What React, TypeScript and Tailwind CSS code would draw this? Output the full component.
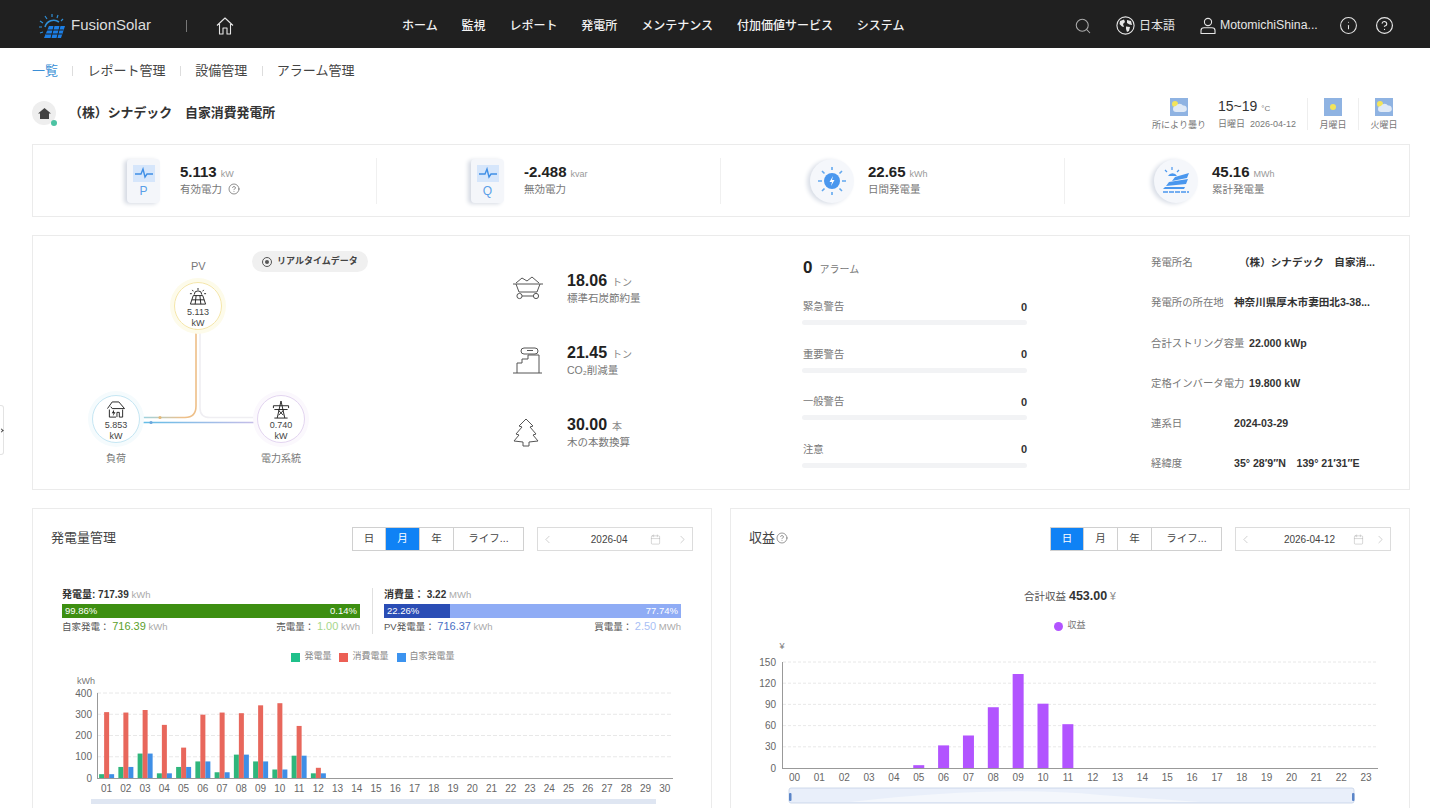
import { ChevronLeft, ChevronRight, Calendar, CircleHelp, Info, Search } from "lucide-react";

const FONT = "font-['Liberation_Sans','Noto_Sans_CJK_JP',sans-serif]";

const NAV = ["ホーム", "監視", "レポート", "発電所", "メンテナンス", "付加価値サービス", "システム"];

const ALARMS = ["緊急警告", "重要警告", "一般警告", "注意"];

const INFO = [
    { label: "発電所名", value: "（株）シナデック　自家消...", w: "w-[88px]" },
    { label: "発電所の所在地", value: "神奈川県厚木市妻田北3-38...", w: "w-[83px]" },
    { label: "合計ストリング容量", value: "22.000 kWp", w: "w-[98px]" },
    { label: "定格インバータ電力", value: "19.800 kW", w: "w-[98px]" },
    { label: "連系日", value: "2024-03-29", w: "w-[83px]" },
    { label: "経緯度", value: "35° 28′9″N　139° 21′31″E", w: "w-[83px]" },
];

const GEN = [18, 52, 115, 22, 52, 78, 27, 110, 78, 40, 105, 22];
const USE = [310, 308, 320, 250, 143, 298, 308, 305, 342, 352, 245, 48];
const REVENUE: Record<number, number> = { 5: 4, 6: 32, 7: 46, 8: 86, 9: 133, 10: 91, 11: 62 };

function Logo() {
    return (
        <svg width="28" height="26" viewBox="0 0 28 26" fill="none">
            <path d="M10 13 L26 13 L22 25 L5 25 Z" fill="#1c7fe6" />
            <path d="M8 17 L24.5 17 M7 21 L23 21 M15 13 L12 25 M21 13 L18 25" stroke="#1f1f1f" strokeWidth="1" />
            <path d="M6 14 A9 9 0 0 1 20 9" stroke="#2f8fd8" strokeWidth="1.6" />
            <path d="M13 1 V4 M6 3 L8 6 M19 2 L18 5 M1 8 L4 10 M0 14 H3 M1 20 L4 19 M24 6 L22 8" stroke="#2f8fd8" strokeWidth="1.2" />
        </svg>
    );
}

function HomeOutline() {
    return (
        <svg width="18" height="18" viewBox="0 0 18 18" fill="none" stroke="#e5e5e5" strokeWidth="1.1">
            <path d="M1 8.5 L9 1 L17 8.5 M3.5 7 V17 H7 V11 H11 V17 H14.5 V7" strokeLinejoin="round" />
        </svg>
    );
}

function GlobeIcon() {
    return (
        <svg width="19" height="19" viewBox="0 0 19 19" className="ml-[24px]">
            <circle cx="9.5" cy="9.5" r="8.6" fill="none" stroke="#e5e5e5" strokeWidth="1.1" />
            <path d="M4 5 L8 3.5 L9 6 L7 8 L8 11 L6 10.5 L3.5 8 Z M11 4 L15 5 L16 9 L13.5 8.5 L11 7 Z M10 10.5 L14 11 L13 15 L11 16 L10 13 Z" fill="#e5e5e5" />
        </svg>
    );
}

function UserIcon() {
    return (
        <svg width="16" height="18" viewBox="0 0 16 18" fill="none" stroke="#e5e5e5" strokeWidth="1.1" className="ml-[25px]">
            <circle cx="8" cy="5" r="3.6" />
            <path d="M1 16.5 V13.5 Q1 10.8 4 10.8 H12 Q15 10.8 15 13.5 V16.5 Z" strokeLinejoin="round" />
        </svg>
    );
}

function WeatherIcon({ cloud = true }: { cloud?: boolean }) {
    return (
        <svg width="18" height="18" viewBox="0 0 18 18" className="shrink-0">
            <rect width="18" height="18" fill="#8fb3e2" />
            {cloud ? (
                <>
                    <circle cx="5" cy="6" r="3" fill="#f3e45a" />
                    <path d="M6 14 a3 3 0 0 1 0-6 a4 4 0 0 1 7-0.5 a3.2 3.2 0 0 1 1 6.5 Z" fill="#dfe9f6" />
                </>
            ) : (
                <circle cx="9" cy="9" r="3" fill="#f3e45a" />
            )}
        </svg>
    );
}

function MeterIcon({ letter }: { letter: string }) {
    return (
        <div className="w-[33px] h-[44px] rounded-[4px] bg-[#f4f6fa] shadow-[-3px_1px_4px_#d5dae3] flex flex-col items-center pt-[6px]">
            <svg width="22" height="17" viewBox="0 0 22 17">
                <rect width="22" height="17" fill="#d6e6fb" />
                <path d="M2 9 H8 L10 4 L12 12 L14 9 H20" fill="none" stroke="#3f8fe6" strokeWidth="1.4" />
            </svg>
            <span className="text-[12px] leading-[18px] text-[#5a9fe8]">{letter}</span>
        </div>
    );
}

function SunIcon() {
    return (
        <div className="w-[44px] h-[44px] rounded-full bg-[#f5f7fb] shadow-[-3px_1px_4px_#d9dee7] flex items-center justify-center">
            <svg width="32" height="32" viewBox="0 0 32 32">
                <circle cx="16" cy="16" r="8" fill="#4a97ee" />
                <path d="M17 11 L13.5 17 H16 L15 21 L18.5 15 H16 Z" fill="#fff" />
                <path d="M16 2 V5 M16 27 V30 M2 16 H6 M26 16 H30 M6 6 L8.5 8.5 M26 6 L23.5 8.5 M6 26 L8.5 23.5 M26 26 L23.5 23.5" stroke="#62a8ef" strokeWidth="1.6" />
            </svg>
        </div>
    );
}

function FieldIcon() {
    return (
        <div className="w-[44px] h-[44px] rounded-full bg-[#f5f7fb] shadow-[-3px_1px_4px_#d9dee7] flex items-center justify-center">
            <svg width="32" height="32" viewBox="0 0 32 32">
                <path d="M8 11 a5 5 0 0 1 9 0 Z" fill="#4a97ee" />
                <path d="M12 2 V5 M5 5 L7 7 M19 5 L17 7" stroke="#4a97ee" strokeWidth="1.2" />
                <path d="M15 12 L29 8 L27 13 L12 16 Z M9 17 L28 14 L26 19 L6 21 Z M5 22 H25 L24 24 H3 Z" fill="#4a97ee" />
                <path d="M3 27 H29" stroke="#4a97ee" strokeWidth="1.6" strokeDasharray="5 1" />
            </svg>
        </div>
    );
}

function Kpi({ icon, value, unit, label, help }: { icon: React.ReactNode; value: string; unit: string; label: string; help?: boolean }) {
    return (
        <div className="flex items-center w-[344px] h-[46px] border-r border-[#f0f0f0] last:border-r-0">
            <div className="w-[47px] flex justify-center ml-[87px] mr-[1px]">{icon}</div>
            <div className="ml-[12px] mb-[3px]">
                <div className="flex items-baseline gap-[4px] leading-[20px]">
                    <span className="text-[15px] font-bold text-[#222]">{value}</span>
                    <span className="text-[9px] text-[#999]">{unit}</span>
                </div>
                <div className="flex items-center gap-[6px] text-[10.5px] leading-[14px] text-[#777] mt-[-2px]">
                    {label}
                    {help && <CircleHelp size={12} strokeWidth={1.2} className="text-[#444]" />}
                </div>
            </div>
        </div>
    );
}

function FlowNode({ pos, ring, value, label, children }: { pos: string; ring: string; value: string; label: string; children: React.ReactNode }) {
    return (
        <div className={`absolute w-[48px] ${pos}`}>
            <div className={`w-[48px] h-[48px] rounded-full border-[1.5px] bg-white flex flex-col items-center pt-[5px] ${ring}`}>
                {children}
                <span className="text-[9px] leading-[11px] text-[#444] mt-[1px]">{value}</span>
                <span className="text-[9px] leading-[11px] text-[#444]">kW</span>
            </div>
            {label && <div className="text-center text-[10px] whitespace-nowrap text-[#777] mt-[8px] flex justify-center">{label}</div>}
        </div>
    );
}

function FlowDiagram() {
    return (
        <div className="relative w-[480px] h-[253px] shrink-0">
            <svg className="absolute left-0 top-0" width="480" height="253" fill="none">
                <defs>
                    <linearGradient id="loadFlow" x1="85" x2="150" y1="0" y2="0" gradientUnits="userSpaceOnUse">
                        <stop offset="0.3" stopColor="#8fd5ee" />
                        <stop offset="1" stopColor="#eec08a" />
                    </linearGradient>
                    <linearGradient id="gridFlow" x1="110" x2="225" y1="0" y2="0" gradientUnits="userSpaceOnUse">
                        <stop offset="0" stopColor="#62bde6" />
                        <stop offset="1" stopColor="#c9bde8" />
                    </linearGradient>
                </defs>
                <path d="M167 80 V172 Q167 181.5 177 181.5 H250" stroke="#efeef2" strokeWidth="1.6" />
                <path d="M163 80 V170 Q163 181.5 152 181.5" stroke="#eebf88" strokeWidth="1.6" />
                <path d="M152 181.5 H85" stroke="url(#loadFlow)" strokeWidth="1.6" />
                <path d="M85 186.5 H225" stroke="url(#gridFlow)" strokeWidth="1.6" />
                <circle cx="127" cy="181.5" r="1.6" fill="#e4b878" />
                <circle cx="118" cy="186.5" r="1.6" fill="#6aa7dc" />
            </svg>
            <div className="absolute left-[158px] top-[22px] text-[11px] text-[#777]">PV</div>
            <div className="absolute left-[219px] top-[15px] w-[116px] h-[21px] rounded-full bg-[#f0f0f0] flex items-center pl-[10px] gap-[5px]">
                <span className="w-[10px] h-[10px] rounded-full border border-[#555] flex items-center justify-center">
                    <span className="w-[4px] h-[4px] rounded-full bg-[#555]" />
                </span>
                <span className="text-[9px] font-bold text-[#444]">リアルタイムデータ</span>
            </div>
            <FlowNode pos="left-[141px] top-[46px] shadow-[0_0_0_4px_#fdfbea] rounded-full h-[48px]" ring="border-[#f5e6a8]" value="5.113" label="">
                <svg width="20" height="19" viewBox="0 0 20 19" fill="none" stroke="#222" strokeWidth="1">
                    <path d="M6 7 a4 4 0 0 1 8 0 M10 0 V2 M4 2 L5 3.5 M16 2 L15 3.5 M1.5 6 H3.5 M16.5 6 H18.5" />
                    <path d="M5 8 H15 L18 17 H2 Z M3.5 12.5 H16.5 M8 8 L7 17 M12 8 L13 17" />
                </svg>
            </FlowNode>
            <FlowNode pos="left-[59px] top-[159px]" ring="border-[#c5e6f3] shadow-[0_0_0_4px_#f5fbfd]" value="5.853" label="負荷">
                <svg width="20" height="19" viewBox="0 0 20 19" fill="none" stroke="#222" strokeWidth="1">
                    <path d="M1 8 L6 1 H13 L19 8 H6 L4.5 6 M3 9 V17 H10 M17 9 V17 H13.5 V12 H11 V17" />
                    <path d="M8 9 L5.5 13 H7.5 L6.5 16 L9.5 12 H7.8 Z" fill="#222" stroke="none" />
                </svg>
            </FlowNode>
            <FlowNode pos="left-[224px] top-[159px]" ring="border-[#e3d5f0] shadow-[0_0_0_4px_#fbf8fd]" value="0.740" label="電力系統">
                <svg width="20" height="19" viewBox="0 0 20 19" fill="none" stroke="#222" strokeWidth="1">
                    <path d="M10 0 L6 18 M10 0 L14 18 M2 5 H18 M3 9 H17 M2 5 V7.5 M18 5 V7.5 M3 18 H17 M7.5 10 L12.5 15 M12.5 10 L7.5 15" />
                </svg>
            </FlowNode>
        </div>
    );
}

function StatRow({ icon, value, unit, label }: { icon: React.ReactNode; value: string; unit: string; label: string }) {
    return (
        <div className="flex items-center h-[72px]">
            <div className="w-[54px]">{icon}</div>
            <div className="mb-[2px]">
                <div className="flex items-baseline gap-[5px] leading-[20px]">
                    <span className="text-[16px] font-bold text-[#222]">{value}</span>
                    <span className="text-[10px] text-[#888]">{unit}</span>
                </div>
                <div className="text-[10.5px] leading-[14px] text-[#777] mt-[-2px]">{label}</div>
            </div>
        </div>
    );
}

function CoalIcon() {
    return (
        <svg width="30" height="28" viewBox="0 0 30 28" fill="none" stroke="#555" strokeWidth="1">
            <path d="M3 8 L9 3 L14 6 L19 2 L26 8 M0 9 H30 M3 9 L6 17 H24 L27 9 M9 21 H20" />
            <circle cx="6.5" cy="21" r="2.6" />
            <circle cx="23" cy="21" r="2.6" />
        </svg>
    );
}

function FactoryIcon() {
    return (
        <svg width="30" height="28" viewBox="0 0 30 28" fill="none" stroke="#555" strokeWidth="1">
            <path d="M0 26 H29 M4 26 V16 H9 V12 H15 V8 H26 V26" />
            <path d="M11 1 H22 a3 3 0 0 1 0 6 H11 a3 3 0 0 1 0 -6 Z M14 3.5 H20" />
        </svg>
    );
}

function TreeIcon() {
    return (
        <svg width="26" height="30" viewBox="0 0 26 30" fill="none" stroke="#555" strokeWidth="1" strokeLinejoin="round">
            <path d="M13 1 L20 8 L17 9 L23 16 L20 17 L25 23 L16 24 V28 H10 V24 L1 23 L6 17 L3 16 L9 9 L6 8 Z" />
        </svg>
    );
}

function TabGroup({ active }: { active: number }) {
    const tabs = [
        { t: "日", w: "w-[33px]" },
        { t: "月", w: "w-[34px]" },
        { t: "年", w: "w-[34px]" },
        { t: "ライフ...", w: "w-[69px]" },
    ];
    return (
        <div className="flex h-[24px] border border-[#d0d0d0] text-[10.5px] text-[#444]">
            {tabs.map((tab, i) => (
                <div key={tab.t} className={`${tab.w} flex items-center justify-center border-r border-[#d0d0d0] last:border-r-0 ${i === active ? "bg-[#0f82f5] text-white" : ""}`}>
                    {tab.t}
                </div>
            ))}
        </div>
    );
}

function DatePicker({ date }: { date: string }) {
    return (
        <div className="w-[156px] h-[24px] border border-[#dcdcdc] flex items-center justify-between px-[3px] text-[10px] text-[#444] ml-[13px]">
            <ChevronLeft size={13} strokeWidth={1} className="text-[#aaa]" />
            <span className="ml-[22px]">{date}</span>
            <Calendar size={11} strokeWidth={1} className="text-[#aaa] ml-[8px]" />
            <ChevronRight size={13} strokeWidth={1} className="text-[#aaa]" />
        </div>
    );
}

function EnergyChart() {
    const days = Array.from({ length: 30 }, (_, i) => i);
    const sx = (i: number) => 97 + 19.25 * (i + 0.5);
    const sy = (v: number) => 778 - (v * 85) / 400;
    return (
        <svg className="block" width="678" height="138" viewBox="33 670 678 138" fontFamily="'Liberation Sans', 'Noto Sans CJK JP', sans-serif">
            <text x="77" y="684" fontSize="9" fill="#777">kWh</text>
            {[100, 200, 300, 400].map((v) => (
                <line key={v} x1="97" x2="673" y1={sy(v)} y2={sy(v)} stroke="#e2e2e2" strokeDasharray="4 2" strokeWidth="0.8" />
            ))}
            {[0, 100, 200, 300, 400].map((v) => (
                <text key={v} x="92" y={sy(v) + 3.5} fontSize="10" fill="#666" textAnchor="end">{v}</text>
            ))}
            <line x1="97.5" x2="97.5" y1="693" y2="778" stroke="#999" />
            <line x1="97" x2="673" y1="778.5" y2="778.5" stroke="#999" />
            {GEN.map((g, i) => (
                <g key={i}>
                    <rect x={sx(i) - 7.5} y={sy(g)} width="5" height={778 - sy(g)} fill="#2fb67c" />
                    <rect x={sx(i) - 2.5} y={sy(USE[i])} width="5" height={778 - sy(USE[i])} fill="#e8675c" />
                    <rect x={sx(i) + 2.5} y={sy(g)} width="5" height={778 - sy(g)} fill="#3f8fe6" />
                </g>
            ))}
            {days.map((i) => (
                <text key={i} x={sx(i)} y="792" fontSize="10" fill="#666" textAnchor="middle">
                    {String(i + 1).padStart(2, "0")}
                </text>
            ))}
            <rect x="91" y="799" width="565" height="5" fill="#dfe6f2" />
        </svg>
    );
}

function RevenueChart() {
    const hours = Array.from({ length: 24 }, (_, i) => i);
    const sx = (i: number) => 794.5 + 24.85 * i;
    const sy = (v: number) => 768 - (v * 106) / 150;
    return (
        <svg className="block" width="678" height="173" viewBox="731 635 678 173" fontFamily="'Liberation Sans', 'Noto Sans CJK JP', sans-serif">
            <text x="782" y="649" fontSize="9" fill="#777" textAnchor="middle">¥</text>
            {[30, 60, 90, 120, 150].map((v) => (
                <line key={v} x1="783" x2="1378" y1={sy(v)} y2={sy(v)} stroke="#e2e2e2" strokeDasharray="3 2" strokeWidth="0.8" />
            ))}
            {[0, 30, 60, 90, 120, 150].map((v) => (
                <text key={v} x="776" y={sy(v) + 3.5} fontSize="10" fill="#666" textAnchor="end">{v}</text>
            ))}
            <line x1="782.5" x2="782.5" y1="662" y2="768" stroke="#999" />
            <line x1="782" x2="1378" y1="768.5" y2="768.5" stroke="#999" />
            {hours.map((i) => (
                <g key={i}>
                    {REVENUE[i] !== undefined && <rect x={sx(i) - 5.5} y={sy(REVENUE[i])} width="11" height={768 - sy(REVENUE[i])} fill="#b254ff" />}
                    <text x={sx(i)} y="781" fontSize="10" fill="#666" textAnchor="middle">{String(i).padStart(2, "0")}</text>
                </g>
            ))}
            <rect x="789" y="788" width="565" height="15" rx="2" fill="#e9effa" stroke="#c3d0e6" strokeWidth="0.8" />
            <path d="M850 802 Q1000 785 1100 795 L1200 802 Z" fill="#f4f7fc" />
            <rect x="789" y="793" width="2.5" height="8" rx="1" fill="#5b85c8" />
            <rect x="1352" y="793" width="2.5" height="8" rx="1" fill="#5b85c8" />
        </svg>
    );
}

function LegendItem({ color, label }: { color: string; label: string }) {
    return (
        <div className="flex items-center gap-[4px]">
            <span className={`w-[9px] h-[9px] ${color}`} />
            <span>{label}</span>
        </div>
    );
}

export default function App() {
    return (
        <div className={`h-screen overflow-hidden bg-white ${FONT}`}>
            <header className="h-12 pt-[3px] bg-[#202020] flex items-center text-white relative">
                <div className="ml-[39px] w-[32px]">
                    <Logo />
                </div>
                <span className="text-[15px] text-[#ddd] w-[115px]">FusionSolar</span>
                <span className="w-px h-[12px] bg-[#777]" />
                <div className="ml-[29px]">
                    <HomeOutline />
                </div>
                <nav className="ml-[168px] flex gap-[23.9px] text-[12px] font-medium text-[#f2f2f2]">
                    {NAV.map((n) => (
                        <span key={n}>{n}</span>
                    ))}
                </nav>
                <div className="ml-auto mr-[36px] flex items-center text-[#e5e5e5] text-[12px]">
                    <Search size={18} strokeWidth={1.4} className="text-[#aaa]" />
                    <GlobeIcon />
                    <span className="ml-[4px]">日本語</span>
                    <UserIcon />
                    <span className="ml-[4px] w-[98px] text-[12.3px] whitespace-nowrap">MotomichiShina...</span>
                    <Info size={19} strokeWidth={1.3} className="ml-[21px]" />
                    <CircleHelp size={19} strokeWidth={1.5} className="ml-[17px]" />
                </div>
            </header>

            <div className="pl-[32px] pr-[20px]">
                <div className="flex items-center h-[46px] text-[13px] text-[#444]">
                    <span className="text-[#3b8fd6]">一覧</span>
                    <span className="w-px h-[10px] bg-[#ddd] mx-[14.3px]" />
                    <span>レポート管理</span>
                    <span className="w-px h-[10px] bg-[#ddd] mx-[14.3px]" />
                    <span>設備管理</span>
                    <span className="w-px h-[10px] bg-[#ddd] mx-[14.3px]" />
                    <span>アラーム管理</span>
                </div>

                <div className="flex items-start justify-between h-[50px] pt-[4px]">
                    <div className="flex items-center mt-[3px]">
                        <div className="relative w-[24px] h-[24px] rounded-full bg-[#eeeeee] flex items-center justify-center">
                            <svg width="13" height="13" viewBox="0 0 13 13">
                                <path d="M6.5 1 L13 6.5 H11 V12 H2 V6.5 H0 Z" fill="#444" />
                            </svg>
                            <span className="absolute right-[-1px] bottom-[-1px] w-[6px] h-[6px] rounded-full bg-[#4cc3a3]" />
                        </div>
                        <span className="ml-[13px] text-[12.9px] font-bold text-[#333]">（株）シナデック　自家消費発電所</span>
                    </div>
                    <div className="flex items-start mr-[1px] text-[9px] text-[#777]">
                        <div className="flex flex-col items-center w-[56px]">
                            <WeatherIcon />
                            <span className="mt-[3px]">所により曇り</span>
                        </div>
                        <div className="ml-[11px] w-[89px]">
                            <div className="text-[14px] leading-[16px] text-[#333]">
                                15~19 <span className="text-[8px] text-[#777]">°C</span>
                            </div>
                            <div className="mt-[1px]">日曜日&nbsp; 2026-04-12</div>
                        </div>
                        <div className="flex flex-col items-center w-[51px] h-[32px] border-l border-[#eee]">
                            <WeatherIcon cloud={false} />
                            <span className="mt-[3px]">月曜日</span>
                        </div>
                        <div className="flex flex-col items-center w-[51px] h-[32px] border-l border-[#eee]">
                            <WeatherIcon />
                            <span className="mt-[3px]">火曜日</span>
                        </div>
                    </div>
                </div>

                <div className="h-[73px] border border-[#ebebeb] flex items-center">
                    <Kpi icon={<MeterIcon letter="P" />} value="5.113" unit="kW" label="有効電力" help />
                    <Kpi icon={<MeterIcon letter="Q" />} value="-2.488" unit="kvar" label="無効電力" />
                    <Kpi icon={<SunIcon />} value="22.65" unit="kWh" label="日間発電量" />
                    <Kpi icon={<FieldIcon />} value="45.16" unit="MWh" label="累計発電量" />
                </div>

                <div className="mt-[18px] h-[255px] border border-[#ebebeb] flex">
                    <FlowDiagram />
                    <div className="w-[289px] pt-[17px] shrink-0">
                        <StatRow icon={<CoalIcon />} value="18.06" unit="トン" label="標準石炭節約量" />
                        <StatRow icon={<FactoryIcon />} value="21.45" unit="トン" label="CO₂削減量" />
                        <StatRow icon={<TreeIcon />} value="30.00" unit="本" label="木の本数換算" />
                    </div>
                    <div className="w-[349px] pt-[22px] shrink-0">
                        <div className="flex items-baseline gap-[7px] h-[40px] pl-[1px]">
                            <span className="text-[17px] leading-[20px] font-bold text-[#222]">0</span>
                            <span className="text-[10px] text-[#777]">アラーム</span>
                        </div>
                        <div className="flex flex-col gap-[20.5px] w-[225px]">
                            {ALARMS.map((a) => (
                                <div key={a}>
                                    <div className="flex justify-between items-center h-[18px] text-[10.3px] text-[#777] pl-[1px]">
                                        <span>{a}</span>
                                        <span className="text-[11px] font-bold text-[#333]">0</span>
                                    </div>
                                    <div className="mt-[4px] h-[5px] rounded-full bg-[#f2f3f5]" />
                                </div>
                            ))}
                        </div>
                    </div>
                    <div className="flex-1 pt-[7px]">
                        {INFO.map((row) => (
                            <div key={row.label} className="flex items-center h-[40.2px]">
                                <span className={`${row.w} text-[10.4px] text-[#777] whitespace-nowrap shrink-0`}>{row.label}</span>
                                <span className="text-[10.6px] font-bold text-[#333] whitespace-nowrap">{row.value}</span>
                            </div>
                        ))}
                    </div>
                </div>

                <div className="mt-[18px] flex gap-[18px]">
                    <section className="w-[680px] h-[320px] border border-[#ebebeb]">
                        <div className="flex items-center h-[24px] mt-[18px] pl-[18px] pr-[18px]">
                            <h3 className="text-[13px] text-[#444] mr-auto pb-[2px]">発電量管理</h3>
                            <TabGroup active={1} />
                            <DatePicker date="2026-04" />
                        </div>
                        <div className="flex mt-[37px] ml-[29px] text-[9.5px] text-[#555]">
                            <div className="w-[298px]">
                                <div className="leading-[14px] text-[10px]">
                                    <span className="font-bold text-[#333]">発電量: 717.39</span> <span className="text-[#aaa] text-[9.5px]">kWh</span>
                                </div>
                                <div className="h-[14px] mt-[2px] bg-[#3d8f11] flex items-center justify-between px-[3px] text-white">
                                    <span>99.86%</span>
                                    <span>0.14%</span>
                                </div>
                                <div className="flex justify-between leading-[16px]">
                                    <span>自家発電： <span className="text-[#5aa02c] text-[11px]">716.39</span> <span className="text-[#aaa]">kWh</span></span>
                                    <span>売電量： <span className="text-[#a6d68b] text-[11px]">1.00</span> <span className="text-[#aaa]">kWh</span></span>
                                </div>
                            </div>
                            <div className="w-px h-[46px] bg-[#e0e0e0] mx-[11.5px]" />
                            <div className="w-[297px]">
                                <div className="leading-[14px] text-[10px]">
                                    <span className="font-bold text-[#333]">消費量： 3.22</span> <span className="text-[#aaa] text-[9.5px]">MWh</span>
                                </div>
                                <div className="h-[14px] mt-[2px] bg-[#8facf5] flex items-center justify-between text-white">
                                    <span className="w-[22.26%] h-full bg-[#2a4db5] flex items-center pl-[3px]">22.26%</span>
                                    <span className="pr-[3px]">77.74%</span>
                                </div>
                                <div className="flex justify-between leading-[16px]">
                                    <span>PV発電量： <span className="text-[#4a6fc4] text-[11px]">716.37</span> <span className="text-[#aaa]">kWh</span></span>
                                    <span>買電量： <span className="text-[#a9bff5] text-[11px]">2.50</span> <span className="text-[#aaa]">MWh</span></span>
                                </div>
                            </div>
                        </div>
                        <div className="flex justify-center gap-[8px] mt-[15px] mb-[6px] ml-[2px] h-[14px] text-[9px] text-[#888]">
                            <LegendItem color="bg-[#1fc08a]" label="発電量" />
                            <LegendItem color="bg-[#ec5f55]" label="消費電量" />
                            <LegendItem color="bg-[#3c93ef]" label="自家発電量" />
                        </div>
                        <EnergyChart />
                    </section>

                    <section className="w-[680px] h-[320px] border border-[#ebebeb]">
                        <div className="flex items-center h-[24px] mt-[18px] pl-[18px] pr-[18px]">
                            <h3 className="text-[13px] text-[#444] mr-auto flex items-center gap-[1px] pb-[2px]">
                                収益
                                <CircleHelp size={12} strokeWidth={1.2} className="text-[#555]" />
                            </h3>
                            <TabGroup active={0} />
                            <DatePicker date="2026-04-12" />
                        </div>
                        <div className="mt-[36px] text-center text-[10.5px] text-[#555] h-[18px] leading-[18px]">
                            合計収益 <span className="text-[12.5px] font-bold text-[#333]">453.00</span> <span className="text-[#888]">¥</span>
                        </div>
                        <div className="mt-[14px] h-[14px] flex items-center justify-center gap-[4px] text-[9px] text-[#777]">
                            <span className="w-[9px] h-[9px] rounded-full bg-[#b254ff]" />
                            収益
                        </div>
                        <div className="mt-[2px]">
                            <RevenueChart />
                        </div>
                    </section>
                </div>
            </div>

            <div className="absolute left-0 top-[405px] w-[4px] h-[50px] bg-white border border-l-0 border-[#e3e3e3] rounded-r-[3px] flex items-center">
                <span className="w-[3px] h-[3px] rotate-45 border-t border-r border-[#444]" />
            </div>
        </div>
    );
}
